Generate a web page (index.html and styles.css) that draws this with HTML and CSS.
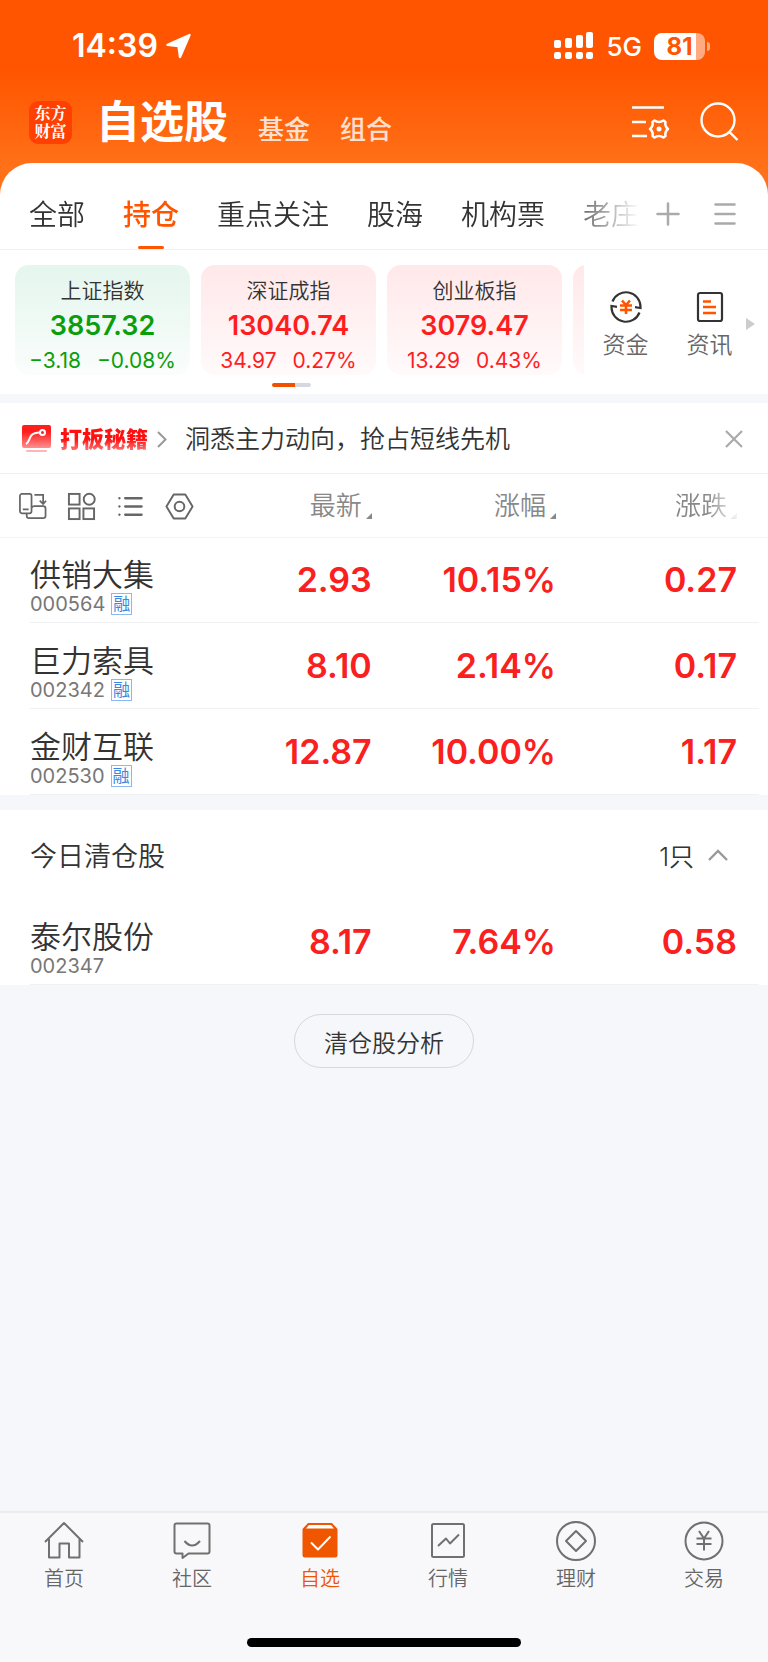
FILE: index.html
```html
<!DOCTYPE html>
<html lang="zh-CN">
<head>
  <meta charset="UTF-8">
  <meta name="viewport" content="width=device-width, initial-scale=1.0">
  <title>自选股</title>
  <link rel="stylesheet" href="styles.css">
</head>
<body>

<header class="header">
  <div class="status">
    <span class="time">14:39</span>
    <svg class="location" width="26" height="26" viewBox="0 0 26 26"><path d="M23.500 2L14 24l-1.500-11L1.500 11.800z" fill="#fff" stroke="#fff" stroke-width="2.400" stroke-linejoin="round"/></svg>
    <svg class="signal" width="40" height="28" viewBox="0 0 40 28" fill="#fff">
      <rect x="0" y="8" width="7" height="8" rx="2"/><rect x="11" y="6" width="7" height="10" rx="2"/>
      <rect x="22" y="3" width="7" height="13" rx="2"/><rect x="32" y="0" width="7" height="16" rx="2"/>
      <rect x="0" y="20" width="7" height="7" rx="2"/><rect x="11" y="20" width="7" height="7" rx="2"/>
      <rect x="22" y="20" width="7" height="7" rx="2"/><rect x="32" y="20" width="7" height="7" rx="2"/>
    </svg>
    <span class="network">5G</span>
    <span class="battery">81</span>
  </div>
  <div class="title-row">
    <a class="logo" href="#">东方<br>财富</a>
    <h1>自选股</h1>
    <a class="title-link" href="#">基金</a>
    <a class="title-link" href="#">组合</a>
    <button class="icon-btn settings" aria-label="设置">
      <svg width="39" height="36" viewBox="0 0 39 36" fill="none" stroke="#fff" stroke-width="2.500">
        <path d="M1 3.500h32M1 18h14M1 32h15"/>
        <path d="M23.500 16.500Q28 19.500 32.500 16.500L34.500 18Q33.500 22 37 25Q33.500 28 34.500 32L32.500 33.500Q28 30.500 23.500 33.500L21.500 32Q22.500 28 19 25Q22.500 22 21.500 18Z" stroke-linejoin="round"/>
        <circle cx="28" cy="25" r="2.500" fill="#fff" stroke="none"/>
      </svg>
    </button>
    <button class="icon-btn" aria-label="搜索">
      <svg width="40" height="40" viewBox="0 0 40 40" fill="none" stroke="#fff" stroke-width="2.400"><circle cx="18" cy="18" r="16.500"/><path d="M29 29.500l8.500 8.500"/></svg>
    </button>
  </div>
</header>

<main>
  <nav class="tabs">
    <div class="tab-list">
      <a href="#">全部</a>
      <a href="#" class="active">持仓</a>
      <a href="#">重点关注</a>
      <a href="#">股海</a>
      <a href="#">机构票</a>
      <a href="#">老庄</a>
    </div>
    <button class="icon-btn" aria-label="添加分组">
      <svg width="24" height="24" viewBox="0 0 24 24" stroke="#aaa" stroke-width="2.500" stroke-linecap="round"><path d="M1.500 12h21M12 1.500v21"/></svg>
    </button>
    <button class="icon-btn menu" aria-label="管理分组">
      <svg width="22" height="24" viewBox="0 0 22 24" stroke="#aaa" stroke-width="2.500" stroke-linecap="round"><path d="M1.500 2.500h19M1.500 12h19M1.500 21.500h19"/></svg>
    </button>
  </nav>

  <section class="indices">
    <div class="index-list">
      <a href="#" class="index down">
        <span class="index-name">上证指数</span>
        <strong>3857.32</strong>
        <span class="index-change"><span>−3.18</span><span>−0.08%</span></span>
      </a>
      <a href="#" class="index">
        <span class="index-name">深证成指</span>
        <strong>13040.74</strong>
        <span class="index-change"><span>34.97</span><span>0.27%</span></span>
      </a>
      <a href="#" class="index">
        <span class="index-name">创业板指</span>
        <strong>3079.47</strong>
        <span class="index-change"><span>13.29</span><span>0.43%</span></span>
      </a>
      <span class="index"></span>
    </div>
    <div class="shortcuts">
      <a href="#">
        <svg width="34" height="32" viewBox="0 0 34 32" fill="none" stroke="#333" stroke-width="2.200">
          <path d="M3.500 10.500A14.500 14.500 0 0 1 31.500 15.500V17L26 16.200"/>
          <path d="M30.500 21.500A14.500 14.500 0 0 1 2.500 16.500V15L8 15.800"/>
          <path d="M13 9.500l4 4.500 4-4.500M11 14.500h12M11 19h12M17 14v9" stroke="#ff5500" stroke-width="2.600"/>
        </svg>
        资金
      </a>
      <a href="#">
        <svg width="34" height="32" viewBox="0 0 34 32" fill="none" stroke="#333" stroke-width="2.200">
          <rect x="5" y="2" width="24" height="28" rx="2"/>
          <path d="M10 10.500h8M10 16h13M10 22h13" stroke="#ff5500" stroke-width="2.600"/>
        </svg>
        资讯
      </a>
    </div>
    <span class="more"></span>
    <span class="pager"></span>
  </section>

  <section class="promo">
    <svg width="29" height="28" viewBox="0 0 29 28">
      <defs><linearGradient id="red" x2="0" y2="1"><stop offset=".3" stop-color="#ff1e1e"/><stop offset="1" stop-color="#ff8f8f"/></linearGradient></defs>
      <rect width="29" height="23" rx="2" fill="url(#red)"/>
      <rect x="4" y="25" width="21" height="2" rx="1" fill="#ffb5b5"/>
      <path d="M4 19C8 17 7 10 12 8.500Q15 7.500 18 7.500" fill="none" stroke="#fff" stroke-width="2"/>
      <circle cx="20.500" cy="7.500" r="2.500" fill="none" stroke="#fff" stroke-width="2"/>
    </svg>
    <a href="#" class="promo-tag">打板秘籍</a>
    <svg width="10" height="17" viewBox="0 0 10 17" fill="none" stroke="#999" stroke-width="2"><path d="M1 1l7.500 7.500L1 16"/></svg>
    <a href="#" class="promo-text">洞悉主力动向，抢占短线先机</a>
    <button class="icon-btn" aria-label="关闭">
      <svg width="18" height="18" viewBox="0 0 18 18" stroke="#aaa" stroke-width="2.200"><path d="M1 1l16 16M17 1L1 17"/></svg>
    </button>
  </section>

  <table class="stocks">
    <colgroup><col class="col-name"><col class="col-num"><col class="col-num"><col></colgroup>
    <thead>
      <tr>
        <th>
          <div class="tools">
            <button class="icon-btn" aria-label="横竖屏">
              <svg width="30" height="30" viewBox="0 0 30 30" fill="none" stroke="#666" stroke-width="1.800">
                <rect x="2" y="2" width="12" height="20" rx="2"/><path d="M5 18h6M17 3h9v9M22.500 9l3.500 3.500L29 9M14 16q1-1.500 3-1.500h9q2.500 0 2.500 2.500v7.500q0 2.500-2.500 2.500H11.500q-2.500 0-2.500-2.500V22"/>
              </svg>
            </button>
            <button class="icon-btn" aria-label="宫格">
              <svg width="30" height="30" viewBox="0 0 30 30" fill="none" stroke="#666" stroke-width="2">
                <rect x="2" y="2" width="11" height="11"/><circle cx="23" cy="7.500" r="5.700"/><rect x="2" y="17" width="11" height="11"/><rect x="17" y="17" width="11" height="11"/>
              </svg>
            </button>
            <button class="icon-btn" aria-label="列表">
              <svg width="30" height="30" viewBox="0 0 30 30" stroke="#666" stroke-width="2.400" stroke-linecap="round"><path d="M9.500 6.500h17M9.500 15h17M9.500 23.500h17M3.500 6.500h.1M3.500 15h.1M3.500 23.500h.1"/></svg>
            </button>
            <button class="icon-btn" aria-label="设置">
              <svg width="30" height="30" viewBox="0 0 30 30" fill="none" stroke="#666" stroke-width="2" stroke-linejoin="round"><path d="M9 2.500h12l7.500 12.500L21 27.500H9L1.500 15z"/><circle cx="15" cy="15" r="5"/></svg>
            </button>
          </div>
        </th>
        <th><button class="sort">最新</button></th>
        <th><button class="sort">涨幅</button></th>
        <th><button class="sort faded">涨跌</button></th>
      </tr>
    </thead>
    <tbody>
      <tr>
        <td><div class="name">供销大集</div><div class="code">000564 <span class="badge">融</span></div></td>
        <td>2.93</td><td>10.15%</td><td>0.27</td>
      </tr>
      <tr>
        <td><div class="name">巨力索具</div><div class="code">002342 <span class="badge">融</span></div></td>
        <td>8.10</td><td>2.14%</td><td>0.17</td>
      </tr>
      <tr>
        <td><div class="name">金财互联</div><div class="code">002530 <span class="badge">融</span></div></td>
        <td>12.87</td><td>10.00%</td><td>1.17</td>
      </tr>
    </tbody>
  </table>

  <section class="cleared">
    <div class="cleared-head">
      <h2>今日清仓股</h2>
      <button class="toggle">1只
        <svg width="20" height="12" viewBox="0 0 20 12" fill="none" stroke="#999" stroke-width="2.400"><path d="M1 11l9-9 9 9"/></svg>
      </button>
    </div>
    <table class="stocks">
      <colgroup><col class="col-name"><col class="col-num"><col class="col-num"><col></colgroup>
      <tbody>
        <tr>
          <td><div class="name">泰尔股份</div><div class="code">002347</div></td>
          <td>8.17</td><td>7.64%</td><td>0.58</td>
        </tr>
      </tbody>
    </table>
  </section>

  <button class="analysis">清仓股分析</button>
</main>

<footer class="footer">
  <nav class="tabbar">
    <a href="#">
      <svg width="40" height="40" viewBox="0 0 40 40"><path d="M1 21L20 2l19 19M5 18v18.500h10.500V22.500h9.500v14h10.500V18"/></svg>
      首页
    </a>
    <a href="#">
      <svg width="40" height="40" viewBox="0 0 40 40"><path d="M4.500 2.500h31q2 0 2 2v26q0 2-2 2H16.500L10.500 37v-4.500h-6q-2 0-2-2v-26q0-2 2-2zM12.500 20q7.500 9 15.500 0"/></svg>
      社区
    </a>
    <a href="#" class="active">
      <svg width="40" height="40" viewBox="0 0 40 40"><path class="solid" d="M8 2h24l5.500 6v26q0 2.500-2.500 2.500H5q-2.500 0-2.500-2.500V8z"/><path class="lid" d="M9 4h22l3 3.500H6z"/><path class="tick" d="M11 21.500l7 7 12.500-13"/></svg>
      自选
    </a>
    <a href="#">
      <svg width="40" height="40" viewBox="0 0 40 40"><rect x="4" y="3" width="32" height="33" rx="1.500"/><path d="M10 25l8-7.500 4 5 9-9"/></svg>
      行情
    </a>
    <a href="#">
      <svg width="40" height="40" viewBox="0 0 40 40"><circle cx="20" cy="20" r="19"/><path d="M20 10l10 10-10 10-10-10z"/></svg>
      理财
    </a>
    <a href="#">
      <svg width="40" height="40" viewBox="0 0 40 40"><circle cx="20" cy="20" r="18.500"/><path d="M15 10l5 7.500 5-7.500M12.500 17.500h15M12.500 23h15M20 17.500V29.500"/></svg>
      交易
    </a>
  </nav>
  <div class="home-bar"></div>
</footer>

</body>
</html>
```
FILE: styles.css
```css
* {
  box-sizing: border-box;
}

body {
  margin: 0;
  min-height: 100vh;
  display: flex;
  flex-direction: column;
  background: #f6f7fa;
  color: #333;
  font-family: Inter, "Noto Sans CJK SC", sans-serif;
  font-weight: 350;
}

a {
  color: inherit;
  text-decoration: none;
}

button {
  padding: 0;
  border: 0;
  background: none;
  color: inherit;
  font: inherit;
  cursor: pointer;
}

svg {
  display: block;
  flex: none;
}

/* header */
.header {
  padding: 28px 28px 35px 29px;
  margin-bottom: -34px;
  background: linear-gradient(#ff5500 70px, #ff7018 164px);
  color: #fff;
}

.status {
  display: flex;
  align-items: center;
  height: 36px;
  padding: 0 35px 0 43px;
}

.time {
  font-size: 32px;
  font-weight: 600;
  line-height: 36px;
}

.location {
  margin-left: 8px;
}

.signal {
  margin-left: auto;
}

.network {
  margin: 0 12px;
  font-size: 26px;
  font-weight: 500;
}

.battery {
  position: relative;
  width: 51px;
  height: 27px;
  border-radius: 8px;
  background: linear-gradient(90deg, #fff 82%, #ffaa80 82%);
  color: #ff5500;
  font-size: 24px;
  font-weight: 700;
  line-height: 27px;
  text-align: center;
}

.battery::after {
  content: "";
  position: absolute;
  right: -5px;
  top: 9px;
  width: 3px;
  height: 9px;
  border-radius: 0 4px 4px 0;
  background: #ffaa80;
}

.title-row {
  display: flex;
  align-items: center;
  height: 80px;
  margin-top: 18px;
}

.logo {
  width: 43px;
  height: 43px;
  padding-top: 3px;
  border-radius: 9px;
  background: #ff4000;
  font-family: "Noto Serif CJK SC", "Noto Sans CJK SC", serif;
  font-size: 16px;
  font-weight: 700;
  line-height: 18px;
  text-align: center;
}

h1 {
  margin: 0 30px 0 24px;
  font-size: 44px;
  font-weight: 600;
  line-height: 48px;
}

.title-link {
  margin: 16px 30px 0 0;
  color: #ffe0d0;
  font-size: 26px;
  font-weight: 500;
  line-height: 32px;
}

.settings {
  margin: 0 30px 0 auto;
}

/* group tabs */
.tabs {
  display: flex;
  align-items: center;
  height: 87px;
  padding: 0 32px 0 29px;
  border-bottom: 1px solid #f0f1f3;
  border-radius: 32px 32px 0 0;
  background: #fff;
}

.tab-list {
  flex: 1;
  display: flex;
  gap: 38px;
  height: 86px;
  margin-right: 16px;
  overflow: hidden;
  font-size: 28px;
  line-height: 104px;
  white-space: nowrap;
  -webkit-mask: linear-gradient(90deg, #000 calc(100% - 80px), transparent);
  mask: linear-gradient(90deg, #000 calc(100% - 80px), transparent);
}

.tab-list a {
  height: 86px;
}

.tab-list .active {
  position: relative;
  color: #ff5500;
  font-weight: 500;
}

.tab-list .active::after {
  content: "";
  position: absolute;
  left: 50%;
  bottom: 0;
  width: 26px;
  height: 3px;
  margin-left: -13px;
  border-radius: 2px;
  background: #ff5500;
}

.tabs .icon-btn {
  margin-top: 16px;
}

.tabs .menu {
  margin-left: 34px;
}

/* market indices */
.indices {
  position: relative;
  display: flex;
  height: 144px;
  padding: 15px 0 0 15px;
  background: #fff;
}

.index-list {
  flex: none;
  display: flex;
  gap: 11px;
  width: 75.5%;
  height: 110px;
  overflow: hidden;
}

.index {
  flex: none;
  display: flex;
  flex-direction: column;
  align-items: center;
  width: 175px;
  padding-top: 11px;
  border-radius: 14px;
  background: linear-gradient(#ffe8ea, #fffafa);
  color: #ff1e1e;
}

.index.down {
  background: linear-gradient(#e4f6ed, #fafdfc);
  color: #0a9f0a;
}

.index-name {
  color: #333;
  font-size: 21px;
  line-height: 30px;
}

.index strong {
  font-size: 27px;
  font-weight: 600;
  line-height: 40px;
}

.index-change {
  display: flex;
  gap: 16px;
  font-size: 21px;
  font-weight: 400;
  line-height: 30px;
}

.shortcuts {
  flex: 1;
  display: flex;
  gap: 38px;
  padding: 26px 0 0 19px;
  color: #666;
  font-size: 23px;
  line-height: 32px;
}

.shortcuts a {
  display: flex;
  flex-direction: column;
  align-items: center;
  gap: 6px;
}

.more {
  position: absolute;
  right: 13px;
  top: 68px;
  border: 6px solid transparent;
  border-left: 9px solid #ccc;
  border-right: 0;
}

.pager {
  position: absolute;
  left: 272px;
  bottom: 7px;
  width: 39px;
  height: 4px;
  border-radius: 2px;
  background: linear-gradient(90deg, #f05000 60%, #d5d8df 60%);
}

/* promo line */
.promo {
  display: flex;
  align-items: center;
  height: 71px;
  margin-top: 9px;
  padding: 2px 25px 0 22px;
  border-bottom: 1px solid #eee;
  background: #fff;
}

.promo-tag {
  margin: 0 9px;
  background: linear-gradient(#ff1010 50%, #ff9090);
  -webkit-background-clip: text;
  background-clip: text;
  color: transparent;
  font-size: 22px;
  font-weight: 900;
  line-height: 30px;
}

.promo-text {
  flex: 1;
  margin-left: 18px;
  font-size: 25px;
  line-height: 32px;
}

/* stock tables */
.stocks {
  width: 100%;
  table-layout: fixed;
  border-collapse: collapse;
  background: #fff;
}

.col-name {
  width: 24.4%;
}

.col-num {
  width: 24%;
}

.stocks th,
.stocks td {
  padding: 0;
  text-align: right;
}

.stocks th {
  height: 63px;
  padding-top: 2px;
  border-bottom: 1px solid #f3f4f6;
  font-weight: 350;
}

.stocks th:last-child,
.stocks td:last-child {
  padding-right: 31px;
}

.stocks td {
  height: 86px;
  color: #fa2020;
  font-size: 34px;
  font-weight: 600;
  line-height: 40px;
}

.stocks tbody tr {
  background: linear-gradient(#f0f1f3, #f0f1f3) no-repeat 30px 100% / calc(100% - 39px) 1px;
}

.stocks td:first-child {
  padding-left: 30px;
  font-weight: 350;
  text-align: left;
  white-space: nowrap;
}

.name {
  padding-top: 11px;
  color: #333;
  font-size: 31px;
  line-height: 36px;
}

.code {
  display: flex;
  align-items: center;
  gap: 6px;
  color: #777;
  font-size: 20px;
  font-weight: 400;
  line-height: 22px;
}

.badge {
  width: 21px;
  height: 22px;
  border: 1px solid #8ab8f0;
  color: #3a87e0;
  font-size: 17px;
  line-height: 20px;
  text-align: center;
}

.tools {
  display: flex;
  gap: 20px;
  padding-left: 18px;
}

.tools svg {
  width: 29px;
  height: 29px;
}

.sort {
  display: inline-flex;
  align-items: flex-end;
  gap: 4px;
  color: #888;
  font-size: 26px;
  line-height: 32px;
}

.sort::after {
  content: "";
  margin-bottom: 3px;
  border: 3px solid #888;
  border-left-color: transparent;
  border-top-color: transparent;
}

.faded {
  -webkit-mask: linear-gradient(90deg, #000 50%, rgba(0, 0, 0, 0.1));
  mask: linear-gradient(90deg, #000 50%, rgba(0, 0, 0, 0.1));
}

/* cleared today */
.cleared {
  margin-top: 15px;
  background: #fff;
}

.cleared-head {
  display: flex;
  align-items: center;
  justify-content: space-between;
  height: 89px;
  padding: 0 40px 0 30px;
}

h2 {
  margin: 0;
  font-size: 27px;
  font-weight: 350;
}

.toggle {
  display: flex;
  align-items: center;
  gap: 14px;
  font-size: 25px;
}

.analysis {
  display: block;
  height: 54px;
  margin: 29px auto 40px;
  padding: 0 29px;
  border: 1px solid #d5d7db;
  border-radius: 27px;
  font-size: 24px;
}

/* bottom bar */
.footer {
  margin-top: auto;
  padding-bottom: 15px;
  border-top: 2px solid #ececee;
  background: #f8f8fb;
}

.tabbar {
  display: flex;
  height: 125px;
  padding-top: 8px;
  color: #666;
  font-size: 20px;
  line-height: 30px;
}

.tabbar a {
  flex: 1;
  display: flex;
  flex-direction: column;
  align-items: center;
  gap: 3px;
}

.tabbar svg {
  fill: none;
  stroke: #707070;
  stroke-width: 2;
  stroke-linejoin: round;
}

.tabbar .active {
  color: #f05500;
}

.tabbar .solid {
  fill: #f05500;
  stroke: none;
}

.tabbar .lid {
  fill: #fff;
  stroke: none;
}

.tabbar .tick {
  stroke: #fff;
}

.home-bar {
  width: 274px;
  height: 9px;
  margin: 0 auto;
  border-radius: 5px;
  background: #000;
}
```
